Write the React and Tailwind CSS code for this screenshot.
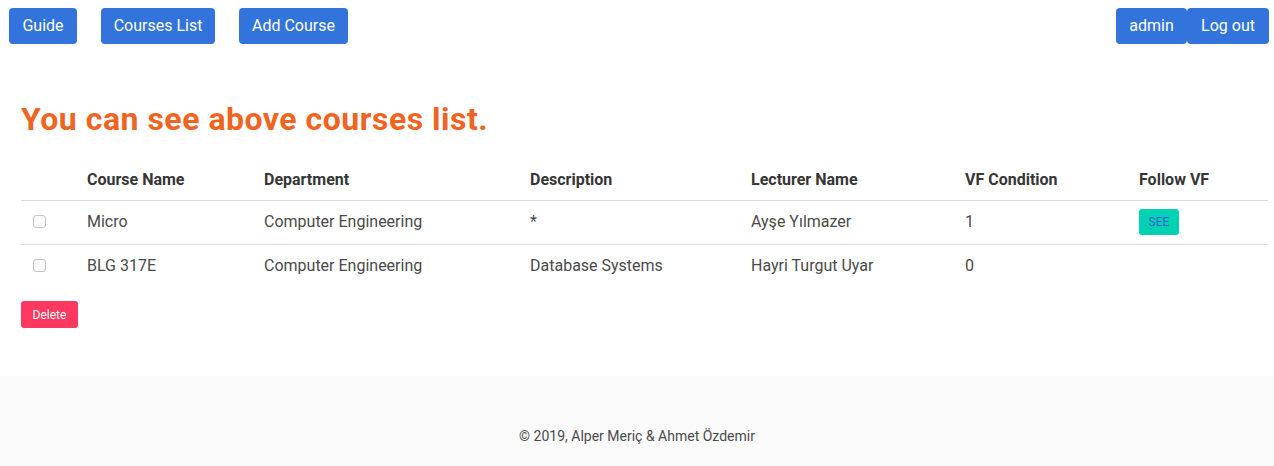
import { useState } from 'react';

const courses = [
  { name: 'Micro', department: 'Computer Engineering', description: '*', lecturer: 'Ayşe Yılmazer', vf: 1, follow: true },
  { name: 'BLG 317E', department: 'Computer Engineering', description: 'Database Systems', lecturer: 'Hayri Turgut Uyar', vf: 0, follow: false },
];

function NavButton({ children, width }) {
  return (
    <button className={`h-9 ${width} rounded bg-[#3273dc] text-white text-base text-center`}>
      {children}
    </button>
  );
}

export default function App() {
  const [checked, setChecked] = useState({});

  return (
    <div className="min-h-screen bg-white text-[#4a4a4a] font-['Roboto','Liberation_Sans',sans-serif]">
      <nav className="flex items-start justify-between pt-2 pl-[9px] pr-[5px] h-[52px]">
        <div className="flex gap-6">
          <NavButton width="w-[68px]">Guide</NavButton>
          <NavButton width="w-[114px]">Courses List</NavButton>
          <NavButton width="w-[109px]">Add Course</NavButton>
        </div>
        <div className="flex">
          <NavButton width="w-[71px]">admin</NavButton>
          <NavButton width="w-[82px]">Log out</NavButton>
        </div>
      </nav>

      <section className="pl-[21px] pr-[6px] pt-[49px] pb-[48px]">
        <h1 className="text-[32px] leading-[36px] font-bold tracking-[0.5px] text-[#ef6421] mb-[23px]">
          You can see above courses list.
        </h1>

        <table className="w-full table-fixed border-collapse text-base">
          <thead>
            <tr className="border-b border-[#dbdbdb] h-[40px]">
              <th className="w-[54px]"></th>
              <th className="w-[177px] px-3 py-2 text-left font-bold text-[#363636]">Course Name</th>
              <th className="w-[266px] px-3 py-2 text-left font-bold text-[#363636]">Department</th>
              <th className="w-[221px] px-3 py-2 text-left font-bold text-[#363636]">Description</th>
              <th className="w-[214px] px-3 py-2 text-left font-bold text-[#363636]">Lecturer Name</th>
              <th className="w-[174px] px-3 py-2 text-left font-bold text-[#363636]">VF Condition</th>
              <th className="px-3 py-2 text-left font-bold text-[#363636]">Follow VF</th>
            </tr>
          </thead>
          <tbody>
            {courses.map((c, i) => (
              <tr key={c.name} className={i === 0 ? 'border-b border-[#dbdbdb] h-[44px]' : 'h-[41px]'}>
                <td className="align-top pl-3 pt-[14px]">
                  <input
                    type="checkbox"
                    checked={!!checked[c.name]}
                    onChange={() => setChecked({ ...checked, [c.name]: !checked[c.name] })}
                    className="w-[13px] h-[13px] appearance-none rounded-[3px] border border-[#c4c4c4] bg-[#fafafa] block"
                  />
                </td>
                <td className="align-top px-3 pt-[9px] pb-2 leading-6">{c.name}</td>
                <td className="align-top px-3 pt-[9px] pb-2 leading-6">{c.department}</td>
                <td className="align-top px-3 pt-[9px] pb-2 leading-6">{c.description}</td>
                <td className="align-top px-3 pt-[9px] pb-2 leading-6">{c.lecturer}</td>
                <td className="align-top px-3 pt-[9px] pb-2 leading-6">{c.vf}</td>
                <td className="align-top px-3 pt-[8px] pb-2 leading-6">
                  {c.follow && (
                    <button className="h-[26px] w-10 rounded-[3px] bg-[#00d1b2] text-[12px] text-[#3f63d8] block">
                      SEE
                    </button>
                  )}
                </td>
              </tr>
            ))}
          </tbody>
        </table>

        <button className="mt-[15px] h-[27px] w-[57px] rounded-[3px] bg-[#ff3860] text-white text-[12px] block">
          Delete
        </button>
      </section>

      <footer className="bg-[#fafafa] pt-12 pb-24 text-center text-sm leading-6 text-[#4a4a4a]">
        © 2019, Alper Meriç &amp; Ahmet Özdemir
      </footer>
    </div>
  );
}
